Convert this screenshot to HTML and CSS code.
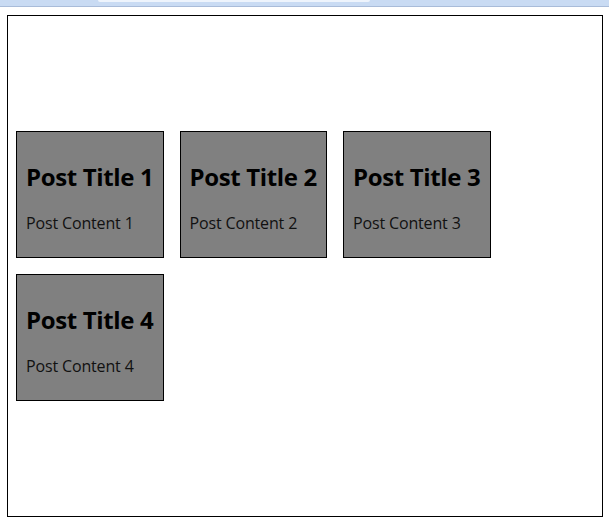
FILE: index.html
```html
<!DOCTYPE html>
<html>
<head>
<meta charset="utf-8">
<link rel="stylesheet" href="styles.css">
</head>
<body>
<div class="chrome"><div class="tab"></div></div>
<div class="board">
  <div class="post"><h2 class="post-title">Post Title 1</h2><p class="post-content">Post Content 1</p></div>
  <div class="post"><h2 class="post-title">Post Title 2</h2><p class="post-content">Post Content 2</p></div>
  <div class="post"><h2 class="post-title">Post Title 3</h2><p class="post-content">Post Content 3</p></div>
  <div class="post"><h2 class="post-title">Post Title 4</h2><p class="post-content">Post Content 4</p></div>
</div>
</body>
</html>
```
FILE: styles.css
```css
html, body {
  margin: 0;
  padding: 0;
  background: #ffffff;
}
body {
  font-family: "Open Sans", "Noto Sans CJK KR", sans-serif;
  color: #000;
}
.chrome {
  height: 6px;
  background: #c9dbf3;
  border-bottom: 1px solid #a9bcd9;
  display: flex;
  justify-content: flex-start;
}
.tab {
  margin-left: 98px;
  width: 272px;
  height: 2px;
  background: #eef4fc;
  border-radius: 0 0 6px 6px;
}
.board {
  margin: 8px 0 0 7px;
  width: 594px;
  height: 500px;
  border: 1px solid #000;
  display: flex;
  flex-wrap: wrap;
  align-content: center;
}
.post {
  box-sizing: border-box;
  width: 147.5px;
  height: 127px;
  margin: 8px;
  padding: 0 8px 0 9px;
  background: #808080;
  border: 1px solid #000;
}
.post-title {
  margin: 29px 0 0;
  font-size: 24px;
  line-height: 32px;
  font-weight: 700;
  letter-spacing: -0.35px;
  white-space: nowrap;
}
.post-content {
  margin: 19px 0 0;
  font-size: 16px;
  line-height: 22px;
  font-weight: 400;
  letter-spacing: -0.15px;
  color: #111;
  white-space: nowrap;
}
```
